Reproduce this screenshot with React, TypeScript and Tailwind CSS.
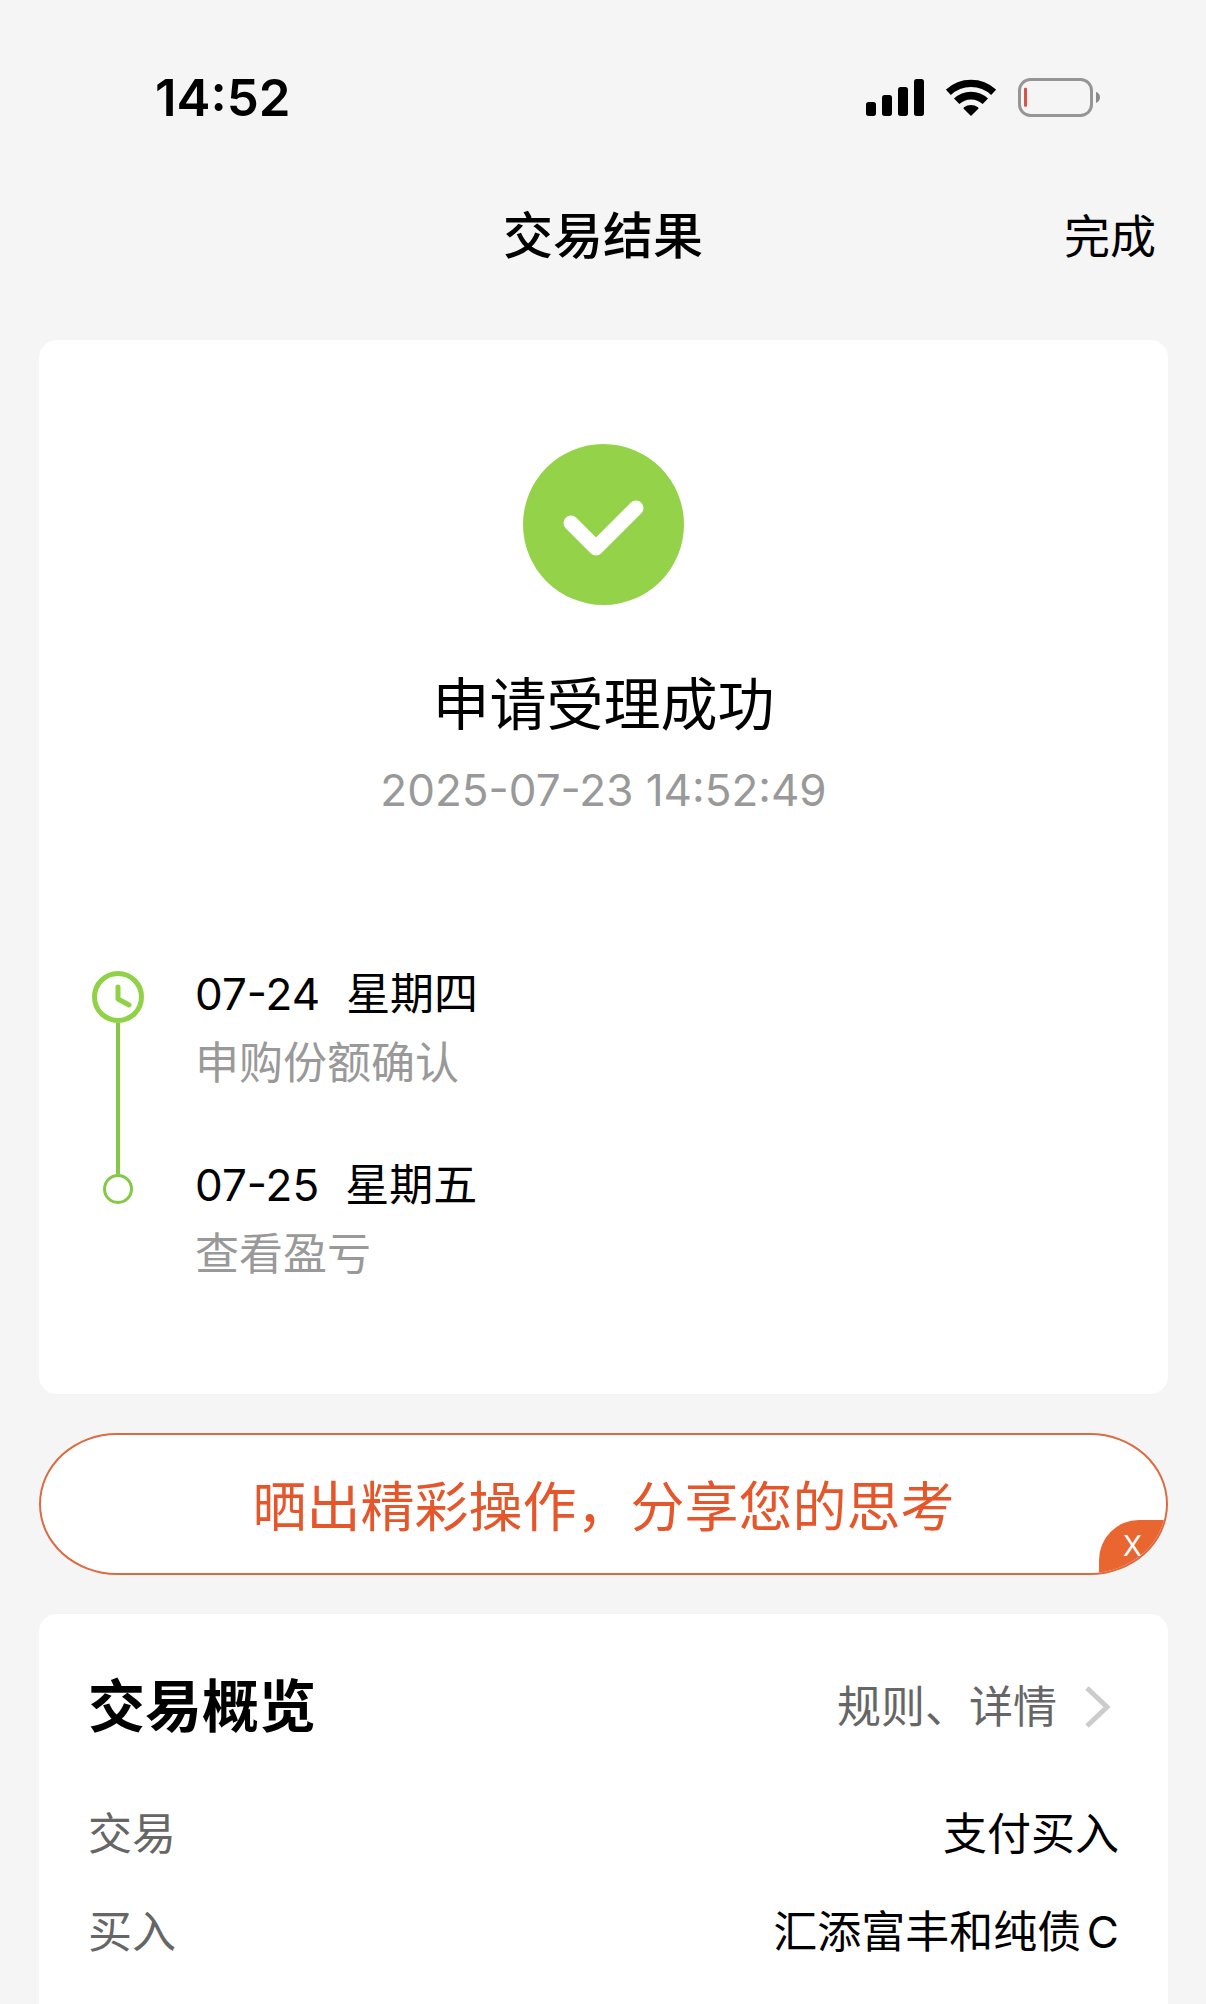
import React from 'react';

type TimelineItem = {
  date: string;
  weekday: string;
  label: string;
};

type OverviewRow = {
  label: string;
  value: string;
};

const timeline: TimelineItem[] = [
  { date: '07-24', weekday: '星期四', label: '申购份额确认' },
  { date: '07-25', weekday: '星期五', label: '查看盈亏' },
];

const overview: OverviewRow[] = [
  { label: '交易', value: '支付买入' },
  { label: '买入', value: '汇添富丰和纯债C' },
];

function SignalIcon() {
  return (
    <svg width="58" height="37" viewBox="0 0 174 111" aria-hidden="true">
      <rect x="0" y="69" width="30" height="42" rx="8" />
      <rect x="48" y="48" width="30" height="63" rx="8" />
      <rect x="96" y="24" width="30" height="87" rx="8" />
      <rect x="144" y="0" width="30" height="111" rx="8" />
    </svg>
  );
}

function WifiIcon() {
  return (
    <svg width="50" height="37" viewBox="0 0 150 111" aria-hidden="true">
      <path d="M7 40a99 99 0 0 1 136 0" fill="none" stroke="#000" strokeWidth="22" />
      <path d="M32 67a62 62 0 0 1 86 0" fill="none" stroke="#000" strokeWidth="23" />
      <path d="M75 111 53 89q-1-2 1-4a36 36 0 0 1 42 0q2 2 1 4Z" />
    </svg>
  );
}

function BatteryIcon() {
  return (
    <svg width="82" height="39" viewBox="0 0 246 117" aria-hidden="true">
      <rect x="4.5" y="4.5" width="216" height="108" rx="33" fill="none" stroke="#959595" strokeWidth="9" />
      <rect x="18" y="29" width="9" height="57" rx="3" fill="#db5347" />
      <path d="M234 41q12 5 12 17t-12 17Z" fill="#8b8b8b" />
    </svg>
  );
}

function StatusBar() {
  return (
    <div className="flex h-[68px] items-center justify-between pr-[106px] pl-[155px]">
      <span className="text-[51px] font-semibold">14:52</span>
      <div className="flex items-center gap-[22px] pb-[2px]">
        <SignalIcon />
        <WifiIcon />
        <BatteryIcon />
      </div>
    </div>
  );
}

function Timeline() {
  return (
    <ol>
      {timeline.map((item, index) => (
        <li key={item.date} className="flex gap-[49px]">
          {/* Marker and connector */}
          <div className="flex w-14 flex-col items-center">
            {index === 0 ? (
              <>
                <svg className="mt-[11px] shrink-0" width="52" height="52" viewBox="0 0 52 52" fill="none" stroke="#90d246" aria-hidden="true">
                  <circle cx="26" cy="26" r="23.5" strokeWidth="5" />
                  <path d="M26 16v12l11 6" strokeWidth="5" strokeLinecap="round" strokeLinejoin="round" />
                </svg>
                <div className="w-1 flex-1 bg-[#85c846]" />
              </>
            ) : (
              <>
                <div className="h-[23px] w-1 bg-[#85c846]" />
                <div className="size-[30px] shrink-0 rounded-full border-3 border-[#85c846]" />
              </>
            )}
          </div>
          <div className={index === 0 ? 'pb-[53px]' : ''}>
            <p className="flex gap-[26px] text-[44px] leading-[69px]">
              <span>{item.date}</span>
              <span>{item.weekday}</span>
            </p>
            <p className="text-[44px] leading-[69px] text-[#999]">{item.label}</p>
          </div>
        </li>
      ))}
    </ol>
  );
}

export default function App() {
  return (
    <div className="flex min-h-screen flex-col bg-[#f5f5f5] pt-16 font-['Inter','Noto_Sans_CJK_SC',sans-serif] text-black">
      <StatusBar />

      <header className="grid h-[208px] grid-cols-[1fr_auto_1fr] items-center px-[50px]">
        <h1 className="col-start-2 text-[50px] font-medium">交易结果</h1>
        <button type="button" className="justify-self-end text-[46px]">完成</button>
      </header>

      <main className="flex flex-1 flex-col gap-[39px] pr-[38px] pl-[39px]">
        <section className="rounded-[18px] bg-white px-[51px] pt-[104px] pb-[105px]">
          <div className="flex flex-col items-center">
            <svg width="161" height="161" viewBox="0 0 161 161" aria-hidden="true">
              <circle cx="80.5" cy="80.5" r="80.5" fill="#93d249" />
              <path d="M48 79 73 104 113 64" fill="none" stroke="#fff" strokeWidth="15" strokeLinecap="round" strokeLinejoin="round" />
            </svg>
            <h2 className="mt-[60px] text-[57px] leading-[80px]">申请受理成功</h2>
            <time className="mb-[125px] text-[44px] leading-[90px] text-[#999]" dateTime="2025-07-23T14:52:49">
              2025-07-23 14:52:49
            </time>
          </div>
          <Timeline />
        </section>

        {/* Share banner */}
        <div className="relative overflow-hidden rounded-[78px/71px] border-2 border-[#dc6a42] bg-white">
          <button type="button" className="w-full pt-[36px] pb-[29px] text-[54px] leading-[73px] text-[#e5562b]">
            晒出精彩操作，分享您的思考
          </button>
          <button
            type="button"
            className="absolute right-0 bottom-0 h-[53px] w-[67px] rounded-tl-[40px] bg-[#e96631] text-[28px] leading-[53px] text-white"
          >
            X
          </button>
        </div>

        <section className="flex-1 rounded-t-[18px] bg-white px-[49px] pt-[44px]">
          <div className="mb-[29px] flex h-[98px] items-center justify-between">
            <h2 className="text-[57px] font-bold">交易概览</h2>
            <a href="#detail" className="flex items-center gap-[28px] pr-[8px] text-[44px] text-[#666]">
              规则、详情
              <svg width="26" height="42" viewBox="0 0 26 42" fill="none" stroke="#ccc" strokeWidth="5" aria-hidden="true">
                <path d="M2 2 22 21 2 40" />
              </svg>
            </a>
          </div>
          <dl>
            {overview.map((row) => (
              <div key={row.label} className="flex h-[98px] items-center justify-between text-[44px] [text-autospace:normal]">
                <dt className="text-[#666]">{row.label}</dt>
                <dd>{row.value}</dd>
              </div>
            ))}
          </dl>
        </section>
      </main>
    </div>
  );
}
